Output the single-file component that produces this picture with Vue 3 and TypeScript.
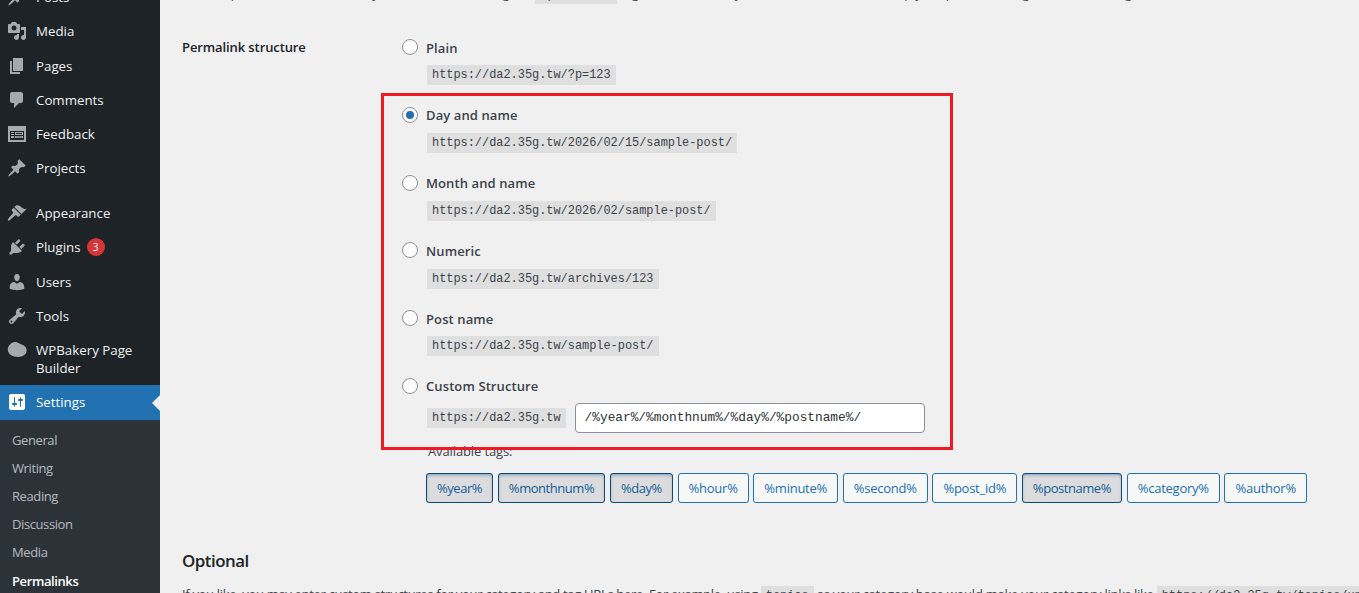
<script setup lang="ts">
interface MenuItem { label: string; icon: string; mt?: number; badge?: string }
const pin = 'M10.44 3.02l1.82-1.82 6.36 6.35-1.83 1.82c-1.05-.68-2.48-.57-3.41.36l-.75.75c-.92.93-1.04 2.35-.35 3.41l-1.83 1.82-2.41-2.41-2.8 2.79c-.42.42-3.38 2.71-3.8 2.29s1.86-3.39 2.28-3.81l2.79-2.79L4.1 9.36l1.83-1.82c1.05.69 2.48.57 3.4-.36l.75-.75c.93-.92 1.05-2.35.36-3.41z'
const menu: MenuItem[] = [
  { label: 'Posts', icon: pin },
  { label: 'Media', icon: 'M13 11V4c0-.55-.45-1-1-1h-1.67L9 1H5L3.67 3H2c-.55 0-1 .45-1 1v7c0 .55.45 1 1 1h10c.55 0 1-.45 1-1zM7 4.5c1.38 0 2.5 1.12 2.5 2.5S8.38 9.5 7 9.5 4.5 8.38 4.5 7 5.62 4.5 7 4.5zM14 6h5v10.5c0 1.38-1.12 2.5-2.5 2.5S14 17.88 14 16.5s1.12-2.5 2.5-2.5c.17 0 .34.02.5.05V9h-3V6zm-4 8.05V13h2v3.5c0 1.38-1.12 2.5-2.5 2.5S7 17.88 7 16.5 8.12 14 9.5 14c.17 0 .34.02.5.05z' },
  { label: 'Pages', icon: 'M6 15V2h10v13H6zm-1 1h8v2H3V5h2v11z' },
  { label: 'Comments', icon: 'M5 2h9c1.1 0 2 .9 2 2v7c0 1.1-.9 2-2 2h-2l-5 5v-5H5c-1.1 0-2-.9-2-2V4c0-1.1.9-2 2-2z' },
  { label: 'Feedback', icon: 'M1 2h18v16H1V2zm2 5v9h14V7H3zm1 1h3v1H4V8zm4 0h8v3H8V8zm1 1v1h6V9H9zM4 10h3v1H4v-1zm0 2h3v2H4v-2zm4 0h8v2H8v-2zm1 .7v.6h6v-.6H9z' },
  { label: 'Projects', icon: pin },
  { label: 'Appearance', icon: 'M14.48 11.06L7.41 3.99l1.5-1.5c.5-.56 2.3-.47 3.51.32 1.21.8 1.43 1.28 2.91 2.1 1.18.64 2.45 1.26 4.45.85zM13.77 11.77L6.7 4.7 4.93 6.47c-.39.39-.39 1.02 0 1.41l1.06 1.06c.39.39.39 1.03 0 1.42C5.1 11.3 3 13.5 1.3 15.8c-.5.7-.7 1.3-.3 1.7s1 .2 1.7-.3C5 15.5 7.2 13.4 8.1 12.5c.39-.39 1.02-.39 1.41 0l1.06 1.06c.39.39 1.02.39 1.41 0z', mt: 10.4 },
  { label: 'Plugins', icon: 'M13.11 4.36L9.87 7.6 8 5.73l3.24-3.24c.35-.34 1.05-.2 1.56.32.52.51.66 1.21.31 1.55zm-8 1.77l.91-1.12 9.01 9.01-1.19.84c-.71.71-2.63 1.16-3.82 1.16H6.14L4.9 17.26c-.59.59-1.54.59-2.12 0-.59-.58-.59-1.53 0-2.12l1.24-1.24v-3.88c0-1.13.4-3.19 1.09-3.89zm7.26 3.97l3.24-3.24c.34-.35 1.04-.21 1.55.31.52.51.66 1.21.31 1.55l-3.24 3.25z', badge: '3' },
  { label: 'Users', icon: 'M10 9.25c-2.27 0-2.73-3.44-2.73-3.44C7 4.02 7.82 2 9.97 2c2.16 0 2.98 2.02 2.71 3.81 0 0-.41 3.44-2.68 3.44zm0 2.57L12.72 10c2.39 0 4.52 2.33 4.52 4.53v2.49s-3.65 1.13-7.24 1.13c-3.65 0-7.24-1.13-7.24-1.13v-2.49c0-2.25 1.94-4.48 4.47-4.48z' },
  { label: 'Tools', icon: 'M16.68 9.77c-1.34 1.34-3.3 1.67-4.95.99l-5.41 6.52c-.99.99-2.59.99-3.58 0s-.99-2.59 0-3.57l6.52-5.42c-.68-1.65-.35-3.61.99-4.95 1.28-1.28 3.12-1.62 4.72-1.06l-2.89 2.89 2.82 2.82 2.86-2.87c.53 1.58.18 3.39-1.08 4.65zM3.81 16.21c.4.39 1.04.39 1.43 0 .4-.4.4-1.04 0-1.43-.39-.4-1.03-.4-1.43 0-.39.39-.39 1.03 0 1.43z' },
  { label: 'WPBakery Page Builder', icon: 'M5 2.8C7.5 1.4 10.5 2 12.5 3.6c1.2.9 2.6 1 3.9 1.7C18.6 6.4 19.8 8.5 19.6 10.8c-.2 2.8-2 4.6-4.5 5.4-2 .6-4 1-6.2.6C5.5 16.4 1.6 14.5.9 10.5.4 7.3 2.4 4.3 5 2.8z' }
]
const subs = ['General', 'Writing', 'Reading', 'Discussion', 'Media']
const settingsIcon = 'M18 16V4c0-1.1-.9-2-2-2H4c-1.1 0-2 .9-2 2v12c0 1.1.9 2 2 2h12c1.1 0 2-.9 2-2zM8 11h1c.55 0 1 .45 1 1s-.45 1-1 1H8v1.5c0 .28-.22.5-.5.5s-.5-.22-.5-.5V13H6c-.55 0-1-.45-1-1s.45-1 1-1h1V5.5c0-.28.22-.5.5-.5s.5.22.5.5V11zm5-2h-1c-.55 0-1-.45-1-1s.45-1 1-1h1V5.5c0-.28.22-.5.5-.5s.5.22.5.5V7h1c.55 0 1 .45 1 1s-.45 1-1 1h-1v5.5c0 .28-.22.5-.5.5s-.5-.22-.5-.5V9z'
const options = [
  { label: 'Plain', url: 'https://da2.35g.tw/?p=123', on: false },
  { label: 'Day and name', url: 'https://da2.35g.tw/2026/02/15/sample-post/', on: true },
  { label: 'Month and name', url: 'https://da2.35g.tw/2026/02/sample-post/', on: false },
  { label: 'Numeric', url: 'https://da2.35g.tw/archives/123', on: false },
  { label: 'Post name', url: 'https://da2.35g.tw/sample-post/', on: false }
]
const tags = [
  { t: '%year%', on: true }, { t: '%monthnum%', on: true }, { t: '%day%', on: true },
  { t: '%hour%', on: false }, { t: '%minute%', on: false }, { t: '%second%', on: false },
  { t: '%post_id%', on: false }, { t: '%postname%', on: true }, { t: '%category%', on: false }, { t: '%author%', on: false }
]
</script>

<template>
  <div class="page">
    <aside class="side">
      <ul class="menu">
        <li v-for="m in menu" :key="m.label" class="item" :style="m.mt ? { marginTop: m.mt + 'px' } : undefined">
          <svg class="ico" viewBox="0 0 20 20"><path :d="m.icon" fill-rule="evenodd" /></svg>
          <span class="lab">{{ m.label }}<em v-if="m.badge" class="badge">{{ m.badge }}</em></span>
        </li>
        <li class="item current">
          <svg class="ico" viewBox="0 0 20 20"><path :d="settingsIcon" fill-rule="evenodd" /></svg>
          <span class="lab">Settings</span>
          <i class="arrow"></i>
        </li>
      </ul>
      <ul class="sub">
        <li v-for="s in subs" :key="s">{{ s }}</li>
        <li class="sub-on">Permalinks</li>
      </ul>
    </aside>
    <main class="main">
      <p class="intro">Select a permalink structure for your website. Including the <code>%postname%</code> tag makes links easy to understand, and can help your posts rank higher in search engines.</p>
      <div class="row">
        <div class="th">Permalink structure</div>
        <div class="td">
          <div v-for="o in options" :key="o.label" class="opt">
            <div class="radio-line"><span class="radio" :class="{ on: o.on }"></span><span class="rl">{{ o.label }}</span></div>
            <code class="url">{{ o.url }}</code>
          </div>
          <div class="opt custom">
            <div class="radio-line"><span class="radio"></span><span class="rl">Custom Structure</span></div>
            <div class="custom-row">
              <code class="url">https://da2.35g.tw</code>
              <div class="input">/%year%/%monthnum%/%day%/%postname%/</div>
            </div>
          </div>
          <div class="avail">Available tags:</div>
          <div class="tags">
            <span v-for="t in tags" :key="t.t" class="tag" :class="{ on: t.on }">{{ t.t }}</span>
          </div>
        </div>
      </div>
      <h2>Optional</h2>
      <p class="para">If you like, you may enter custom structures for your category and tag URLs here. For example, using <code>topics</code> <span class="para-mid">as your category base would make your category links like</span> <code>https://da2.35g.tw/topics/uncategorized/</code>.</p>
    </main>
    <div class="redbox"></div>
  </div>
</template>

<style scoped>
.page {
  position: relative;
  display: flex;
  width: 1359px;
  height: 593px;
  overflow: hidden;
  background: #f0f0f1;
  color: #3c434a;
  font: 13px/18px "Open Sans", sans-serif;
  letter-spacing: -0.12px;
}
.side { width: 160px; flex: none; height: 593px; background: #1d2327; overflow: hidden; }
ul { list-style: none; margin: 0; padding: 0; }
.menu { margin-top: -20.1px; }
.item {
  position: relative;
  display: flex;
  color: #f0f0f1;
  padding: 8px 0;
  min-height: 18.3px;
  font-size: 13.3px;
  letter-spacing: 0;
}
.ico { width: 20px; height: 20px; flex: none; margin: -1px 9px -1px 7px; fill: #a7aaad; }
.lab { display: block; width: 118px; }
.badge {
  display: inline-block;
  width: 18px; height: 18px; border-radius: 50%;
  background: #d63638; color: #fff;
  font-style: normal; font-size: 10px; text-align: center;
  margin-left: 6px; vertical-align: top;
}
.item.current { background: #2271b1; color: #fff; min-height: 19px; }
.current .ico { fill: #fff; }
.arrow {
  position: absolute; right: 0; top: 50%;
  margin-top: -8px;
  border: 8px solid transparent; border-right-color: #f0f0f1; border-left: 0;
}
.sub { background: #2c3338; padding: 6px 0 8px; height: 300px; letter-spacing: -0.4px; }
.sub li { padding: 5px 12px; line-height: 18px; color: rgba(240,246,252,.7); }
.sub .sub-on { color: #fff; font-weight: 600; padding-top: 6px; }
.main { flex: 1; min-width: 0; padding-left: 22px; }
.intro { margin: -17px 0 0; line-height: 20px; white-space: nowrap; }
code {
  font-family: "Liberation Mono", monospace;
  font-size: 11.92px;
  letter-spacing: 0;
  background: rgba(0,0,0,.07);
  padding: 3px 5px 2px;
  color: #3c434a;
}
.row { display: flex; margin-top: 33.5px; }
.th { width: 220px; flex: none; color: #1d2327; font-weight: 600; line-height: 18px; letter-spacing: -0.1px; margin-top: -0.5px; }
.td { flex: 1; }
.opt { height: 67.75px; }
.radio-line { display: flex; align-items: center; height: 18px; }
.radio {
  box-sizing: border-box; width: 16px; height: 16px; border-radius: 50%;
  border: 1px solid #8c8f94; background: #fff; margin: -1px 8px 0 0; position: relative; flex: none;
}
.radio.on::after {
  content: ""; position: absolute; left: 3px; top: 3px; width: 8px; height: 8px;
  border-radius: 50%; background: #2271b1;
}
.rl { font-weight: 600; color: #3c434a; letter-spacing: 0.1px; }
.url { display: inline-block; line-height: 15px; margin: 8.9px 0 0 25px; }
.custom { height: 64.5px; }
.custom-row { display: flex; align-items: center; margin-top: 8px; }
.custom-row .url { margin-top: 0; }
.input {
  box-sizing: border-box; width: 350px; height: 30px; margin-left: 9px;
  background: #fff; border: 1px solid #8c8f94; border-radius: 4px;
  padding: 0 9px; line-height: 28px;
  font-family: "Liberation Mono", monospace; font-size: 12.8px; letter-spacing: 0;
  color: #2c3338;
}
.avail { margin-left: 26px; line-height: 18px; }
.tags { display: flex; gap: 4.7px; margin: 13px 0 0 24px; }
.tag {
  box-sizing: border-box; height: 30px; line-height: 28px; padding: 0 10px;
  border: 1px solid #2271b1; border-radius: 3px; background: #f6f7f7; color: #2271b1;
  white-space: nowrap; letter-spacing: -0.25px;
}
.tag.on {
  background: #dcdcde; border-color: #0a4b78; color: #135e96;
  box-shadow: inset 0 2px 5px -3px #0a4b78;
  letter-spacing: -0.45px;
}
h2 { margin: 47px 0 0; font-size: 16.9px; line-height: 21px; font-weight: 600; color: #1d2327; letter-spacing: -0.5px; }
.para { margin: 13px 0 0; line-height: 20px; white-space: nowrap; letter-spacing: -0.32px; }
.para-mid { letter-spacing: -0.24px; }
.redbox {
  position: absolute; left: 381px; top: 93px; width: 572px; height: 357px;
  box-sizing: border-box; border: 3px solid #ed1c24;
}
</style>
